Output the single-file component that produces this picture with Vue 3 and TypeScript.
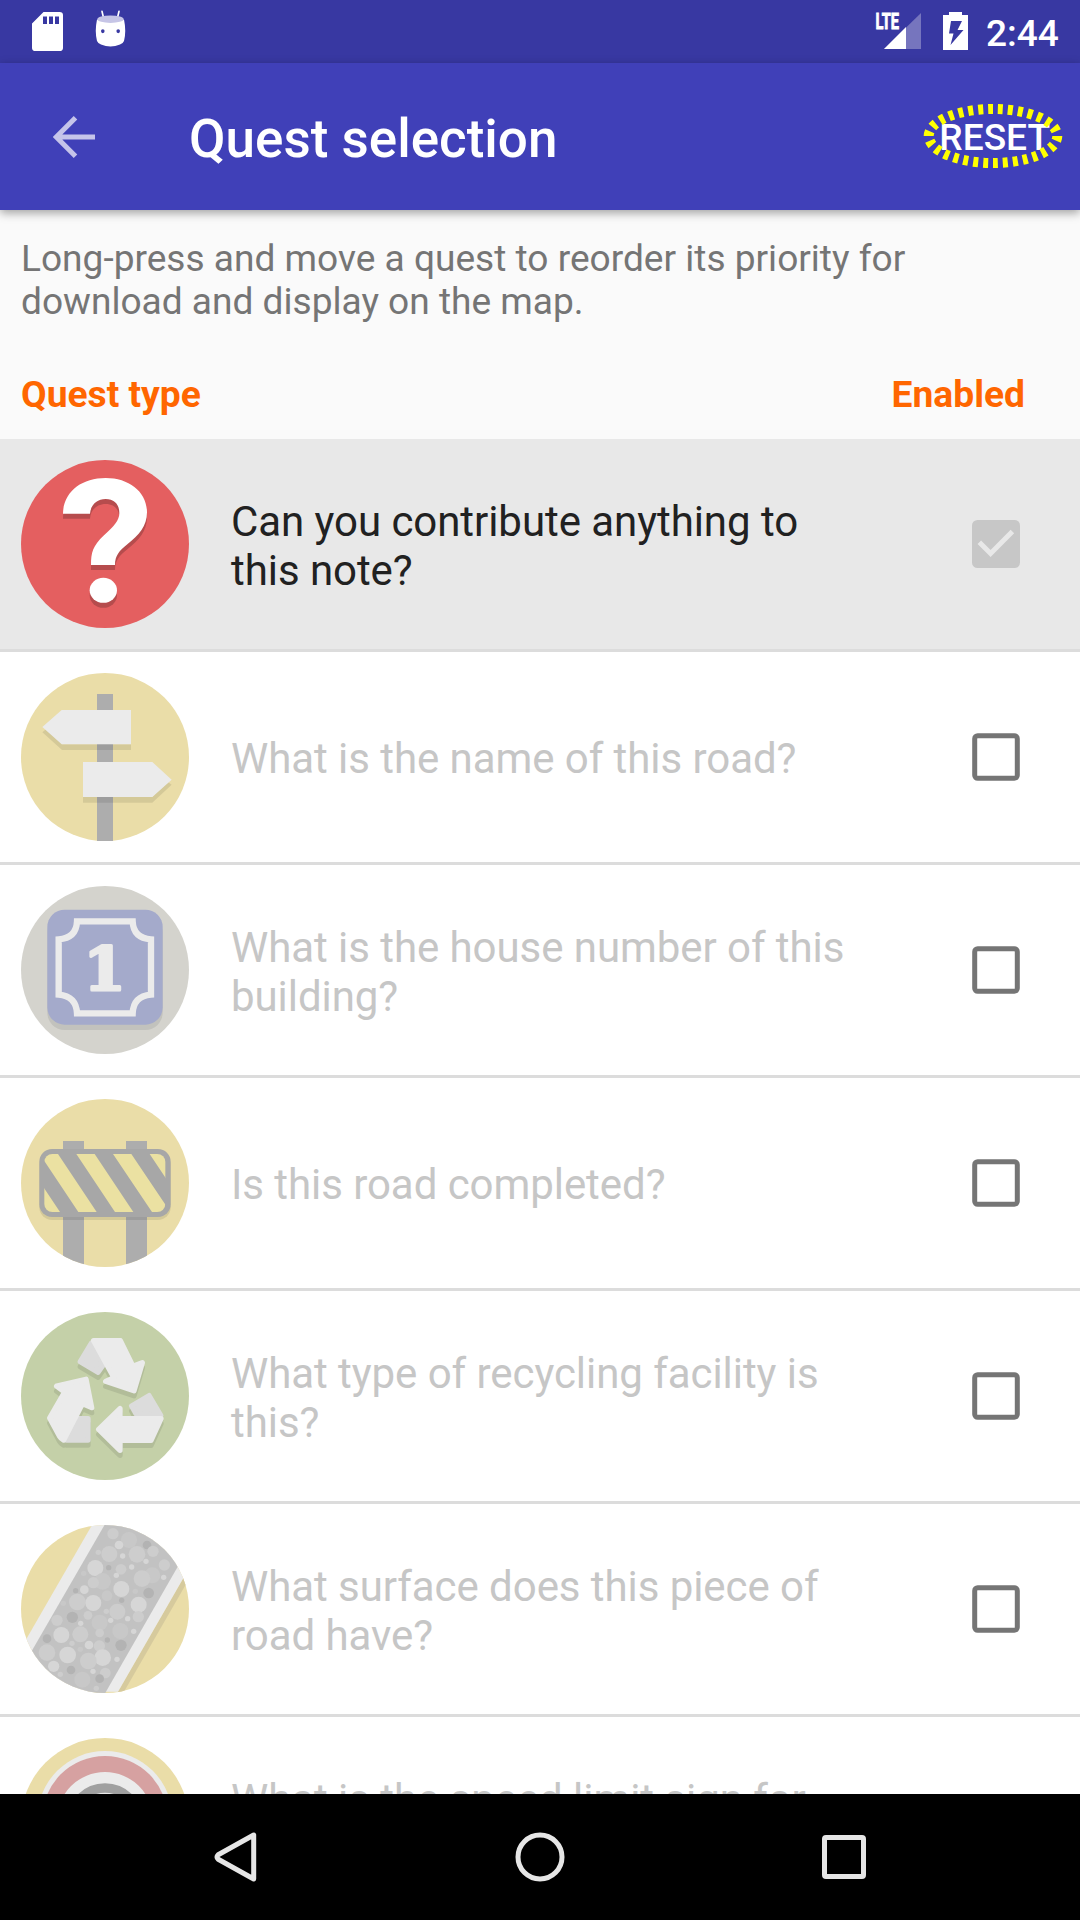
<script setup lang="ts">
interface Quest {
  icon: string
  title: string
  state: 'locked' | 'off'
}

const quests: Quest[] = [
  { icon: 'note', title: 'Can you contribute anything to this note?', state: 'locked' },
  { icon: 'street', title: 'What is the name of this road?', state: 'off' },
  { icon: 'housenumber', title: 'What is the house number of this building?', state: 'off' },
  { icon: 'construction', title: 'Is this road completed?', state: 'off' },
  { icon: 'recycling', title: 'What type of recycling facility is this?', state: 'off' },
  { icon: 'surface', title: 'What surface does this piece of road have?', state: 'off' },
  { icon: 'speed', title: 'What is the speed limit sign for this road?', state: 'off' },
]

// Pebbles of the road surface: x, y, radius, fill
const pebbles: [number, number, number, string][] = [
  [387, 105, 24, '#c8c8c8'], [339, 86, 17, '#cdcdcd'], [357, 120, 13, '#d6d6d6'], [441, 120, 13, '#b3b3b3'],
  [459, 139, 17, '#cdcdcd'], [328, 147, 24, '#cdcdcd'], [411, 148, 25, '#cdcdcd'], [295, 142, 8, '#cdcdcd'],
  [368, 153, 8, '#d6d6d6'], [438, 169, 8, '#d6d6d6'], [493, 180, 17, '#cdcdcd'], [286, 189, 24, '#d6d6d6'],
  [326, 188, 8, '#b3b3b3'], [363, 193, 16, '#cdcdcd'], [395, 186, 8, '#d6d6d6'], [349, 211, 8, '#d6d6d6'],
  [251, 205, 8, '#c8c8c8'], [457, 211, 24, '#c8c8c8'], [426, 221, 25, '#cdcdcd'], [491, 217, 8, '#d6d6d6'],
  [308, 229, 25, '#c8c8c8'], [280, 233, 17, '#cdcdcd'], [253, 254, 13, '#d6d6d6'], [227, 257, 8, '#b3b3b3'],
  [364, 252, 24, '#d6d6d6'], [446, 264, 16, '#b3b3b3'], [406, 259, 8, '#c8c8c8'], [321, 272, 16, '#c8c8c8'],
  [365, 286, 8, '#b3b3b3'], [232, 291, 25, '#cdcdcd'], [280, 294, 24, '#d6d6d6'], [190, 295, 8, '#c8c8c8'],
  [416, 299, 24, '#d6d6d6'], [352, 320, 24, '#cdcdcd'], [319, 319, 8, '#cdcdcd'], [264, 331, 13, '#cdcdcd'],
  [217, 337, 17, '#b3b3b3'], [415, 335, 17, '#cdcdcd'], [383, 341, 8, '#d6d6d6'], [171, 346, 17, '#cdcdcd'],
  [299, 353, 24, '#c8c8c8'], [332, 346, 8, '#d6d6d6'], [242, 355, 8, '#d6d6d6'], [361, 378, 24, '#c8c8c8'],
  [401, 379, 8, '#d6d6d6'], [184, 390, 24, '#d6d6d6'], [241, 388, 24, '#cdcdcd'], [299, 384, 13, '#cdcdcd'],
  [141, 401, 13, '#b3b3b3'], [322, 405, 8, '#b3b3b3'], [216, 415, 8, '#cdcdcd'], [363, 421, 17, '#b3b3b3'],
  [267, 420, 13, '#d6d6d6'], [298, 423, 17, '#cdcdcd'], [241, 433, 8, '#c8c8c8'], [141, 443, 25, '#cdcdcd'],
  [203, 450, 25, '#d6d6d6'], [308, 458, 25, '#d6d6d6'], [265, 468, 25, '#cdcdcd'], [351, 463, 8, '#d6d6d6'],
  [161, 484, 17, '#d6d6d6'], [213, 495, 13, '#b3b3b3'], [279, 499, 8, '#d6d6d6'], [316, 504, 16, '#cdcdcd'],
  [181, 508, 8, '#cdcdcd'], [247, 524, 24, '#c8c8c8'], [299, 521, 13, '#b3b3b3'], [289, 550, 8, '#cdcdcd'],
]
</script>

<template>
  <div class="screen">
    <header class="status">
      <div class="status-left">
        <svg class="sd" viewBox="0 0 31 44" preserveAspectRatio="none"><path fill="#fff" fill-rule="evenodd" d="M11.500 0H27.500Q31 0 31 3.500V40.500Q31 44 27.500 44H3.500Q0 44 0 40.500V13ZM11 5V13.500H15V5ZM17 5V13.500H21V5ZM23 5V13.500H27V5Z" /></svg>
        <svg class="droid" viewBox="0 0 31 43" preserveAspectRatio="none">
          <path stroke="#fff" stroke-width="1.700" stroke-linecap="round" d="M7 1.500 8.300 8M24 1.500 22.700 8" />
          <path fill="#fff" fill-rule="evenodd" d="M2 11Q15.500 17 29 11Q31.500 25 29 36Q28 39 25 40Q15.500 45 6 40Q3 39 2 36Q-.5 25 2 11ZM6 24.500Q6 27 7.800 27T9.600 24.500Q9.600 22.300 7.800 22.300T6 24.500ZM21.400 24.500Q21.400 27 23.200 27T25 24.500Q25 22.300 23.200 22.300T21.400 24.500Z" />
          <ellipse cx="15.500" cy="10.700" rx="13.200" ry="4.300" fill="#c6c5e6" />
        </svg>
      </div>
      <div class="status-right">
        <svg class="signal" viewBox="0 -8 46 46">
          <path fill="#7675be" d="M46 1V37H9Z" />
          <path fill="#fff" d="M9 37 31 15V37Z" />
          <text x=".5" y="17.300" textLength="23.500" lengthAdjust="spacingAndGlyphs" font-size="22.500" font-weight="700" fill="#fff" stroke="#fff" stroke-width=".9">LTE</text>
        </svg>
        <svg class="battery" viewBox="0 0 25 38"><path fill="#fff" fill-rule="evenodd" d="M6 0H19V3H25V38H0V3H6ZM8 9 6 21.500H10.500L7.500 33 20.500 18H14.500L19 9Z" /></svg>
        <span class="clock">2:44</span>
      </div>
    </header>

    <div class="appbar">
      <svg class="back" viewBox="0 0 42 42"><path fill="none" stroke="#c5c4ea" stroke-width="5" d="M42 21H4M22.500 1.800 3.300 21 22.500 40.200" /></svg>
      <h1>Quest selection</h1>
      <div class="reset">
        <span>RESET</span>
        <svg class="ring" viewBox="0 0 140 64"><ellipse cx="70" cy="32" rx="64.300" ry="27" fill="none" stroke="#ff0" stroke-width="10" pathLength="300" stroke-dasharray="5 5" /></svg>
      </div>
    </div>

    <main>
      <p class="hint">Long-press and move a quest to reorder its priority for download and display on the map.</p>
      <div class="heads"><span>Quest type</span><span>Enabled</span></div>

      <ul>
        <li v-for="q in quests" :key="q.icon" :class="q.state">
          <svg v-if="q.icon === 'note'" class="icon" viewBox="63 60 504 504">
            <circle cx="315" cy="312" r="252" fill="#e45f60" />
            <g v-for="(fill, i) in ['#b64c4d', '#fff']" :key="fill" :fill="fill" :transform="i ? '' : 'translate(0 15)'">
              <path d="M189 221C190 155 245 114 317 114C389 114 441 157 441 217C441 258 417 285 382 313C357 333 345 348 345 375H273C273 339 278 318 312 286C342 259 358 241 358 219C358 193 343 177 317 177C291 177 272 194 270 221Z" />
              <ellipse cx="310" cy="451" rx="41" ry="37.500" />
            </g>
          </svg>

          <svg v-else-if="q.icon === 'street'" class="icon" viewBox="63 54 504 504">
            <circle cx="315" cy="306" r="252" fill="#eadda8" />
            <path fill="#adadad" d="M291 117H339V558H291Z" />
            <path fill="#000" fill-opacity=".09" d="M127 232 142 219 186 268H393V285H186ZM249 426H457L501 379 515 389 457 443H249Z" />
            <path fill="#ebebeb" d="M127 216 185 165H393V268H185ZM249 321H457L515 374 457 426H249Z" />
          </svg>

          <svg v-else-if="q.icon === 'housenumber'" class="icon" viewBox="63 63 504 504">
            <circle cx="315" cy="315" r="252" fill="#d4d3cd" />
            <rect x="142" y="150" width="346" height="345" rx="52" fill="#c2c2bd" />
            <rect x="142" y="134" width="346" height="345" rx="52" fill="#a4aacb" />
            <path fill="none" stroke="#ebebeb" stroke-width="19" d="M231 169H398Q400 219 453 223V389Q400 394 398 445H231Q229 394 176 389V223Q229 219 231 169Z" />
            <text x="314" y="374" text-anchor="middle" class="digit">1</text>
          </svg>

          <svg v-else-if="q.icon === 'construction'" class="icon" viewBox="63 57 504 504">
            <defs>
              <clipPath id="disc"><circle cx="315" cy="309" r="252" /></clipPath>
              <clipPath id="board"><rect x="133" y="222" width="363" height="174" rx="24" /></clipPath>
            </defs>
            <circle cx="315" cy="309" r="252" fill="#eadda8" />
            <path fill="#adadad" clip-path="url(#disc)" d="M189 183H252V570H189ZM378 183H441V570H378Z" />
            <rect x="118" y="216" width="394" height="204" rx="38" fill="#000" fill-opacity=".09" />
            <rect x="118" y="207" width="394" height="204" rx="38" fill="#a7a7a7" />
            <path clip-path="url(#board)" fill="#ebe1a2" d="M119 222H174L290 396H235ZM229 222H284L400 396H345ZM339 222H394L511 396H456ZM449 222H504L620 396H565ZM64 222 180 396H125Z" />
          </svg>

          <svg v-else-if="q.icon === 'recycling'" class="icon" viewBox="63 60 504 504">
            <circle cx="315" cy="312" r="252" fill="#c4d0a8" />
            <g v-for="shade in [true, false]" :key="String(shade)" :transform="shade ? 'translate(0 15)' : ''" :fill="shade ? '#b2bd99' : '#dcdcdc'" :stroke="shade ? '#b2bd99' : '#dcdcdc'" stroke-width="16" stroke-linejoin="round">
              <path d="M241 209 274 154 310 218 294 241Z" />
              <path d="M395 342 447 311 482 370 408 365Z" />
              <path d="M232 380H264V444H200Z" />
              <g :fill="shade ? '#b2bd99' : '#ebebeb'" :stroke="shade ? '#b2bd99' : '#ebebeb'">
                <path d="M281 146H361L399 223 427 212 402 296 317 268 342 257Z" />
                <path d="M296 412 360 350V380H483L453 445H360V475Z" />
                <path d="M170 282 258 262 275 347 247 335 191 444Q183 440 179 433L149 378 194 300Z" />
              </g>
            </g>
          </svg>

          <svg v-else-if="q.icon === 'surface'" class="icon" viewBox="63 60 504 504">
            <defs><clipPath id="road"><circle cx="315" cy="312" r="252" /></clipPath></defs>
            <g clip-path="url(#road)">
              <path fill="#eadda8" d="M63 60H567V564H63Z" />
              <path fill="#d6ca9d" d="M560 202 350 567H368L570 217Z" />
              <path fill="#ebebeb" d="M279 55 70 418 40 560H354L567 190V55Z" />
              <path fill="#c2c2c2" d="M317 54 93 442 63 567H314L540 173 567 54Z" />
              <circle v-for="([x, y, r, fill], i) in pebbles" :key="i" :cx="x" :cy="y" :r="r" :fill="fill" />
            </g>
          </svg>

          <svg v-else class="icon" viewBox="0 0 168 168">
            <circle cx="84" cy="84" r="84" fill="#eadda8" />
            <circle cx="84" cy="80.600" r="67.600" fill="#ebebeb" />
            <circle cx="84" cy="80.600" r="62.600" fill="#d6a1a1" />
            <circle cx="84" cy="82" r="48" fill="#ebebeb" />
            <circle cx="84" cy="84" r="34" fill="none" stroke="#a0a0a0" stroke-width="9.500" />
          </svg>

          <span class="title">{{ q.title }}</span>
          <svg class="check" viewBox="0 0 48 48">
            <template v-if="q.state === 'locked'">
              <rect width="48" height="48" rx="5.500" fill="#c7c7c7" />
              <path fill="none" stroke="#e8e8e8" stroke-width="5" d="M7.300 22.200 18.600 33.500 40.400 11.500" />
            </template>
            <rect v-else x="2.700" y="2.700" width="42.600" height="42.600" rx="3" fill="none" stroke="#757575" stroke-width="5" />
          </svg>
        </li>
      </ul>
    </main>

    <nav>
      <svg viewBox="0 0 50 50"><path d="M42.700 3V47L7.200 27.200Q5 25 7.200 22.800Z" /></svg>
      <svg viewBox="0 0 50 50"><circle cx="25" cy="25" r="22" /></svg>
      <svg viewBox="0 0 50 50"><rect x="5.500" y="5.500" width="39" height="39" rx="1.500" /></svg>
    </nav>
  </div>
</template>

<style>
body {
  margin: 0;
}
</style>

<style scoped>
.screen {
  width: 1080px;
  height: 1920px;
  display: flex;
  flex-direction: column;
  overflow: hidden;
  background: #fafafa;
  font-family: Roboto, sans-serif;
}
svg {
  display: block;
  flex: none;
}
.status {
  height: 63px;
  flex: none;
  display: flex;
  justify-content: space-between;
  background: #3838a2;
}
.status-left,
.status-right {
  display: flex;
}
.sd {
  width: 31px;
  height: 39px;
  margin: 12px 0 0 32px;
}
.droid {
  width: 31px;
  height: 37px;
  margin: 10px 0 0 32px;
}
.signal {
  width: 46px;
  height: 46px;
  margin: 4px 22px 0 0;
}
.battery {
  width: 25px;
  height: 38px;
  margin: 12px 18px 0 0;
}
.clock {
  width: 94px;
  font-size: 37px;
  font-weight: 500;
  line-height: 67px;
  color: #fff;
}
.appbar {
  position: relative;
  height: 147px;
  flex: none;
  display: flex;
  align-items: center;
  background: #4040b8;
  box-shadow: 0 3px 9px rgba(0, 0, 0, 0.36);
}
.back {
  width: 42px;
  height: 42px;
  margin-left: 53px;
}
h1 {
  flex: 1;
  margin: 5px 0 0 94px;
  font-size: 53px;
  font-weight: 500;
  line-height: 62px;
  color: #fff;
}
.reset {
  position: relative;
  margin: 2px 30px 0 0;
  font-size: 37.100px;
  font-weight: 500;
  line-height: 43px;
  color: #fff;
}
.ring {
  position: absolute;
  left: -16px;
  top: -12px;
  width: 140px;
  height: 64px;
}
main {
  flex: 1;
  min-height: 0;
  overflow: hidden;
}
.hint {
  margin: 27px 21px 0;
  width: 920px;
  font-size: 37.100px;
  line-height: 43px;
  color: #757575;
}
.heads {
  display: flex;
  justify-content: space-between;
  margin: 50px 55px 0 21px;
  height: 66px;
  font-size: 37.200px;
  font-weight: 700;
  line-height: 43px;
  color: #ff6600;
}
ul {
  margin: 0;
  padding: 0;
  list-style: none;
}
li {
  box-sizing: border-box;
  height: 213px;
  display: flex;
  align-items: center;
  padding: 0 60px 0 21px;
  border-bottom: 3px solid #dcdcdc;
  background: #fff;
  color: #c6c6c6;
}
.locked {
  background: #e8e8e8;
  color: #212121;
}
.icon {
  width: 168px;
  height: 168px;
}
.title {
  width: 640px;
  margin: 0 auto 0 42px;
  padding-top: 3px;
  font-size: 42px;
  line-height: 49px;
  letter-spacing: -0.060px;
}
.digit {
  font: 700 182px 'DejaVu Serif', serif;
  fill: #ebebeb;
  stroke: #ebebeb;
  stroke-width: 9;
  stroke-linejoin: round;
}
.check {
  width: 48px;
  height: 48px;
}
nav {
  height: 126px;
  flex: none;
  display: flex;
  align-items: center;
  justify-content: center;
  gap: 254px;
  background: #000;
}
nav svg {
  width: 50px;
  height: 50px;
  fill: none;
  stroke: #e6e6e6;
  stroke-width: 5;
  stroke-linejoin: round;
}
</style>
